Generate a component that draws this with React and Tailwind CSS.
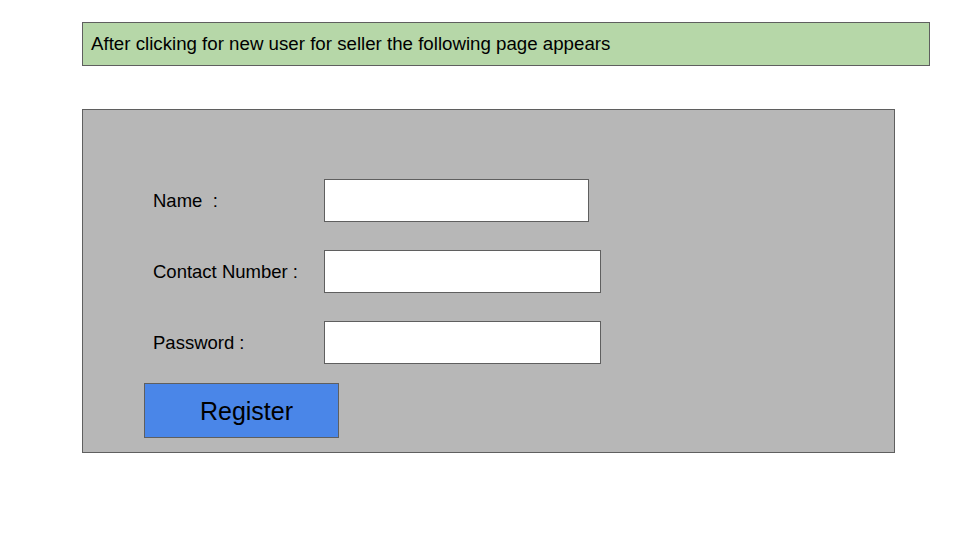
export default function App() {
  const rows = [
    { label: 'Name  :', width: 'w-[265px]' },
    { label: 'Contact Number :', width: 'w-[277px]' },
    { label: 'Password :', width: 'w-[277px]' },
  ];

  return (
    <div
      className="w-[960px] h-[540px] bg-white flex flex-col pl-[82px] pt-[22px] text-black"
      style={{ fontFamily: '"Liberation Sans", Arial, sans-serif' }}
    >
      {/* Nota superior */}
      <div className="w-[848px] h-[44px] border border-[#5f5f5f] bg-[#b6d7a8] flex items-center pl-[8px] text-[18.7px]">
        After clicking for new user for seller the following page appears
      </div>

      {/* Formulario de registro */}
      <div className="mt-[43px] w-[813px] h-[344px] border border-[#5f5f5f] bg-[#b7b7b7] flex flex-col pt-[69px]">
        <div className="flex flex-col gap-[28px] pl-[70px]">
          {rows.map((r) => (
            <div key={r.label} className="flex items-center h-[43px]">
              <span className="w-[171px] text-[18.5px] whitespace-pre">{r.label}</span>
              <div className={`${r.width} h-[43px] bg-white border border-[#5f5f5f]`} />
            </div>
          ))}
        </div>
        <div className="mt-[19px] ml-[61px] w-[195px] h-[55px] bg-[#4a86e8] border border-[#5f5f5f] flex items-center justify-center pl-[10px] pt-[2px] text-[25px]">
          Register
        </div>
      </div>
    </div>
  );
}
